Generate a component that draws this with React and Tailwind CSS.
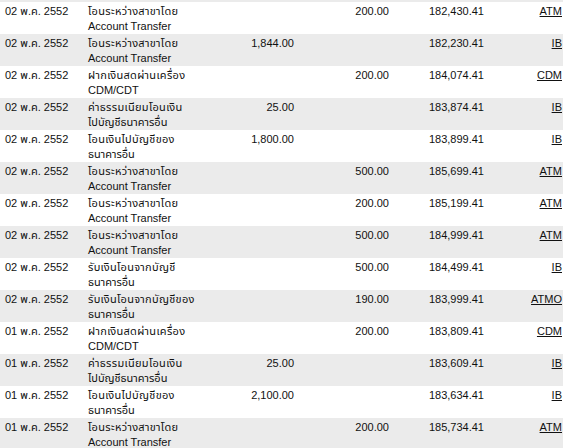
import React from 'react';

const rows = [
  ['02 พ.ค. 2552', ['โอนระหว่างสาขาโดย', 'Account Transfer'], '', '200.00', '182,430.41', 'ATM'],
  ['02 พ.ค. 2552', ['โอนระหว่างสาขาโดย', 'Account Transfer'], '1,844.00', '', '182,230.41', 'IB'],
  ['02 พ.ค. 2552', ['ฝากเงินสดผ่านเครื่อง', 'CDM/CDT'], '', '200.00', '184,074.41', 'CDM'],
  ['02 พ.ค. 2552', ['ค่าธรรมเนียมโอนเงิน', 'ไปบัญชีธนาคารอื่น'], '25.00', '', '183,874.41', 'IB'],
  ['02 พ.ค. 2552', ['โอนเงินไปบัญชีของ', 'ธนาคารอื่น'], '1,800.00', '', '183,899.41', 'IB'],
  ['02 พ.ค. 2552', ['โอนระหว่างสาขาโดย', 'Account Transfer'], '', '500.00', '185,699.41', 'ATM'],
  ['02 พ.ค. 2552', ['โอนระหว่างสาขาโดย', 'Account Transfer'], '', '200.00', '185,199.41', 'ATM'],
  ['02 พ.ค. 2552', ['โอนระหว่างสาขาโดย', 'Account Transfer'], '', '500.00', '184,999.41', 'ATM'],
  ['02 พ.ค. 2552', ['รับเงินโอนจากบัญชี', 'ธนาคารอื่น'], '', '500.00', '184,499.41', 'IB'],
  ['02 พ.ค. 2552', ['รับเงินโอนจากบัญชีของ', 'ธนาคารอื่น'], '', '190.00', '183,999.41', 'ATMO'],
  ['01 พ.ค. 2552', ['ฝากเงินสดผ่านเครื่อง', 'CDM/CDT'], '', '200.00', '183,809.41', 'CDM'],
  ['01 พ.ค. 2552', ['ค่าธรรมเนียมโอนเงิน', 'ไปบัญชีธนาคารอื่น'], '25.00', '', '183,609.41', 'IB'],
  ['01 พ.ค. 2552', ['โอนเงินไปบัญชีของ', 'ธนาคารอื่น'], '2,100.00', '', '183,634.41', 'IB'],
  ['01 พ.ค. 2552', ['โอนระหว่างสาขาโดย', 'Account Transfer'], '', '200.00', '185,734.41', 'ATM'],
];

export default function App() {
  return (
    <div
      className="w-[570px] h-[448px] overflow-hidden bg-white text-[#111] text-[11px] leading-[15px]"
      style={{ fontFamily: '"Liberation Sans", Tahoma, "Noto Sans Thai", sans-serif' }}
    >
      <div className="w-[563px] h-[2px] bg-[#ebebeb]" />
      {rows.map(([date, desc, debit, credit, balance, channel], i) => (
        <div
          key={i}
          className={`w-[563px] h-[32px] pt-[2px] grid grid-cols-[88px_150px_56px_95px_95px_79px] ${i % 2 ? 'bg-[#ebebeb]' : 'bg-white'}`}
        >
          <div className="pl-[5px] whitespace-nowrap">{date}</div>
          <div className="whitespace-nowrap tracking-[0.3px]">
            <div>{desc[0]}</div>
            <div className="tracking-normal">{desc[1]}</div>
          </div>
          <div className="text-right">{debit}</div>
          <div className="text-right">{credit}</div>
          <div className="text-right">{balance}</div>
          <div className="text-right pr-[1px]">
            <a className="underline">{channel}</a>
          </div>
        </div>
      ))}
    </div>
  );
}
